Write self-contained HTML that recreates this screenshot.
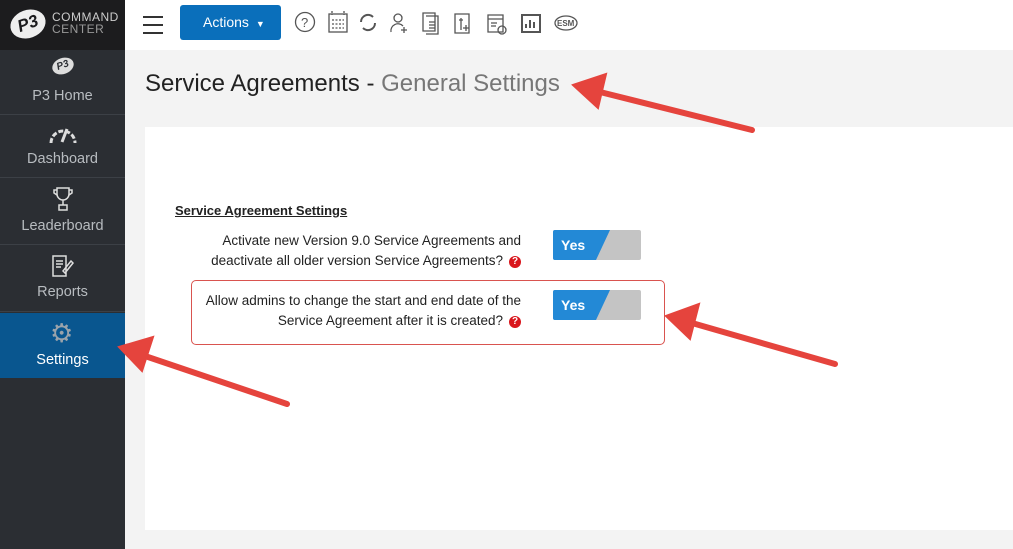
<!DOCTYPE html><html><head><style>
body{margin:0;width:1013px;height:549px;overflow:hidden;background:#f3f3f3;font-family:"Liberation Sans",sans-serif;position:relative}
.sb{position:absolute;left:0;top:0;width:125px;height:549px;background:#2b2e33}
.logo{position:absolute;left:0;top:0;width:125px;height:50px;background:#1c1c1e}
.item{position:absolute;left:0;width:125px;text-align:center;color:#b8bcc0;font-size:14.5px;border-bottom:1px solid #3c4046}
.item .lab{position:absolute;left:0;right:0}
.top{position:absolute;left:125px;top:0;right:0;height:50px;background:#fff}
.panel{position:absolute;left:145px;top:127px;right:0;height:403px;background:#fff}
.q{display:inline-block;width:12px;height:12px;border-radius:50%;background:#d9161c;color:#fff;font-size:10px;font-weight:bold;text-align:center;line-height:12px;vertical-align:1px;margin-left:6px}
.tog{position:absolute;width:88px;height:30px;background:#c4c4c4;border-radius:2px;overflow:hidden}
.tog b{position:absolute;left:8px;top:7px;color:#fff;font-size:14px;z-index:2}
.tog i{position:absolute;left:-10px;top:0;width:60px;height:30px;background:#2389d6;transform:skewX(-25deg)}
.lbl{position:absolute;right:492px;text-align:right;font-size:13.5px;color:#222;line-height:20px}
</style></head><body>
<div class="sb"></div>
<div class="logo">
<div style="position:absolute;left:10px;top:10px;width:36px;height:28px;background:#eee;border-radius:50%;transform:rotate(-20deg);color:#1c1c1e;font-weight:bold;font-style:italic;font-size:17px;text-align:center;line-height:28px">P3</div>
<div style="position:absolute;left:52px;top:11px;color:#ccc;font-size:12px;line-height:12px;letter-spacing:.5px">COMMAND<br><span style="color:#999">CENTER</span></div></div>
<div class="item" style="top:50px;height:64px"><div style="position:absolute;left:52px;top:8px;width:22px;height:16px;background:#ddd;border-radius:50%;transform:rotate(-20deg);font-size:10px;color:#2b2e33;font-weight:bold;font-style:italic;line-height:16px">P3</div><div class="lab" style="top:38px">P3 Home</div></div>
<div class="item" style="top:115px;height:62px"><svg style="position:absolute;left:48px;top:8px" width="30" height="22"><path d="M3 20A12 12 0 0 1 27 20" fill="none" stroke="#ddd" stroke-width="3" stroke-dasharray="5 2"/><path d="M14 19L19 6" stroke="#ddd" stroke-width="3"/></svg><div class="lab" style="top:36px">Dashboard</div></div>
<div class="item" style="top:178px;height:66px"><svg style="position:absolute;left:53px;top:8px" width="20" height="26" fill="none" stroke="#ddd" stroke-width="1.5"><path d="M4 2H16V8A6 6 0 0 1 4 8Z M4 4H1V7L4 9 M16 4H19V7L16 9 M10 14V19 M6 19H14V24H6Z"/></svg><div class="lab" style="top:40px">Leaderboard</div></div>
<div class="item" style="top:245px;height:66px"><svg style="position:absolute;left:51px;top:9px" width="24" height="24" fill="none" stroke="#ddd" stroke-width="1.5"><path d="M2 2H15V22H2Z M5 7H12 M5 10H12 M5 13H10 M12 17L20 7L22 9L14 19Z"/></svg><div class="lab" style="top:39px">Reports</div></div>
<div class="item" style="top:313px;height:65px;background:#09568f;color:#fff;border:0"><div style="position:absolute;left:50px;top:7px;font-size:26px;color:#9aa3ab;line-height:26px">⚙</div><div class="lab" style="top:39px">Settings</div></div>
<div class="top">
<div style="position:absolute;left:18px;top:16px;width:20px;height:14px;border-top:2px solid #333;border-bottom:2px solid #333"><div style="margin-top:6px;height:2px;background:#333"></div></div>
<div style="position:absolute;left:55px;top:5px;width:101px;height:35px;background:#0a6fbb;border-radius:3px;color:#fff;font-size:14px;line-height:35px;text-indent:23px">Actions <span style="font-size:9px;margin-left:3px">▼</span></div>
<svg style="position:absolute;left:168px;top:10px" width="300" height="26" fill="none" stroke="#555" stroke-width="1.3">
<circle cx="12" cy="12" r="9.5"/><text x="8" y="17" font-size="13" fill="#555" stroke="none" font-family="Liberation Sans">?</text>
<rect x="36" y="4" width="18" height="18"/><path d="M39 1V5M51 1V5M39 10h12M39 14h12M39 18h12" stroke-dasharray="2 1.5"/>
<path d="M68 12a7 7 0 0 1 12-5M82 13a7 7 0 0 1-12 5" stroke-width="2"/>
<g transform="translate(5 0)"><circle cx="100" cy="8" r="4"/><path d="M93 22a7 7 0 0 1 12-6M106 17v6M103 20h6"/></g>
<g transform="translate(8 0)"><path d="M122 3h12v18h-12zM125 6h12v18h-12M128 12h6M128 15h6M128 18h6"/></g>
<g transform="translate(10 0)"><path d="M152 4h14v19h-14zM156 10h4M158 8v12M163 15v6M160 18h6"/></g>
<g transform="translate(11 0)"><path d="M184 5h15v17h-15zM184 9h15M187 13h6M187 16h5"/><circle cx="198" cy="20" r="4"/></g>
<g transform="translate(14 0)"><path d="M215 5h18v17h-18zM219 18v-4M223 18v-8M227 18v-6" stroke-width="2"/></g>
<g transform="translate(17 0)"><ellipse cx="256" cy="13" rx="11" ry="7"/><text x="247" y="16" font-size="8" fill="#555" stroke="none" font-weight="bold" font-family="Liberation Sans">ESM</text></g>
</svg>
</div>
<div style="position:absolute;left:145px;top:70px;font-size:24px;color:#222">Service Agreements - <span style="color:#777;font-weight:300">General Settings</span></div>
<div class="panel"></div>
<div style="position:absolute;left:175px;top:203px;font-size:13px;font-weight:bold;text-decoration:underline;color:#222">Service Agreement Settings</div>
<div class="lbl" style="top:231px">Activate new Version 9.0 Service Agreements and<br>deactivate all older version Service Agreements?<span class="q">?</span></div>
<div class="tog" style="left:553px;top:230px"><i></i><b>Yes</b></div>
<div style="position:absolute;left:191px;top:280px;width:472px;height:63px;border:1.5px solid #d9534f;border-radius:5px"></div>
<div class="lbl" style="top:291px">Allow admins to change the start and end date of the<br>Service Agreement after it is created?<span class="q">?</span></div>
<div class="tog" style="left:553px;top:290px"><i></i><b>Yes</b></div>
<svg style="position:absolute;left:0;top:0" width="1013" height="549"><g fill="#e5443d" stroke="#e5443d" stroke-width="6" stroke-linecap="round">
<line x1="752" y1="130" x2="600" y2="92"/><polygon points="573,85 606,74 598,108" stroke-width="2"/>
<line x1="835" y1="364" x2="692" y2="323"/><polygon points="666,316 699,304 690,339" stroke-width="2"/>
<line x1="287" y1="404" x2="145" y2="356"/><polygon points="119,347 153,337 142,371" stroke-width="2"/>
</g></svg>
</body></html>
